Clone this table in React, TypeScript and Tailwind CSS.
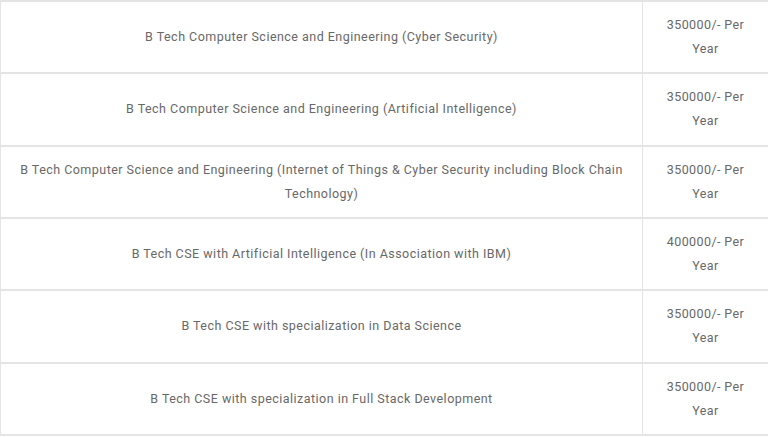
import React from "react";

const rows: [string, string][] = [
  ["B Tech Computer Science and Engineering (Cyber Security)", "350000/- Per Year"],
  ["B Tech Computer Science and Engineering (Artificial Intelligence)", "350000/- Per Year"],
  [
    "B Tech Computer Science and Engineering (Internet of Things & Cyber Security including Block Chain Technology)",
    "350000/- Per Year",
  ],
  ["B Tech CSE with Artificial Intelligence (In Association with IBM)", "400000/- Per Year"],
  ["B Tech CSE with specialization in Data Science", "350000/- Per Year"],
  ["B Tech CSE with specialization in Full Stack Development", "350000/- Per Year"],
];

export default function App() {
  return (
    <div
      className="w-[768px] h-[437px] bg-white overflow-hidden text-[12.5px] leading-[24px] tracking-[0.47px] text-[#686868]"
      style={{ fontFamily: "Roboto, 'Liberation Sans', sans-serif" }}
    >
      <div className="border-t-2 border-l border-[#e4e4e4]">
        {rows.map(([name, price], i) => (
          <div key={i} className="flex h-[72.33px] border-b-2 border-[#e4e4e4]">
            <div className="w-[642px] shrink-0 flex items-center justify-center text-center px-[16px] border-r border-[#e4e4e4]">
              {name}
            </div>
            <div className="flex-1 flex items-center justify-center text-center px-[20px] tracking-[0.4px]">
              {price}
            </div>
          </div>
        ))}
      </div>
    </div>
  );
}
